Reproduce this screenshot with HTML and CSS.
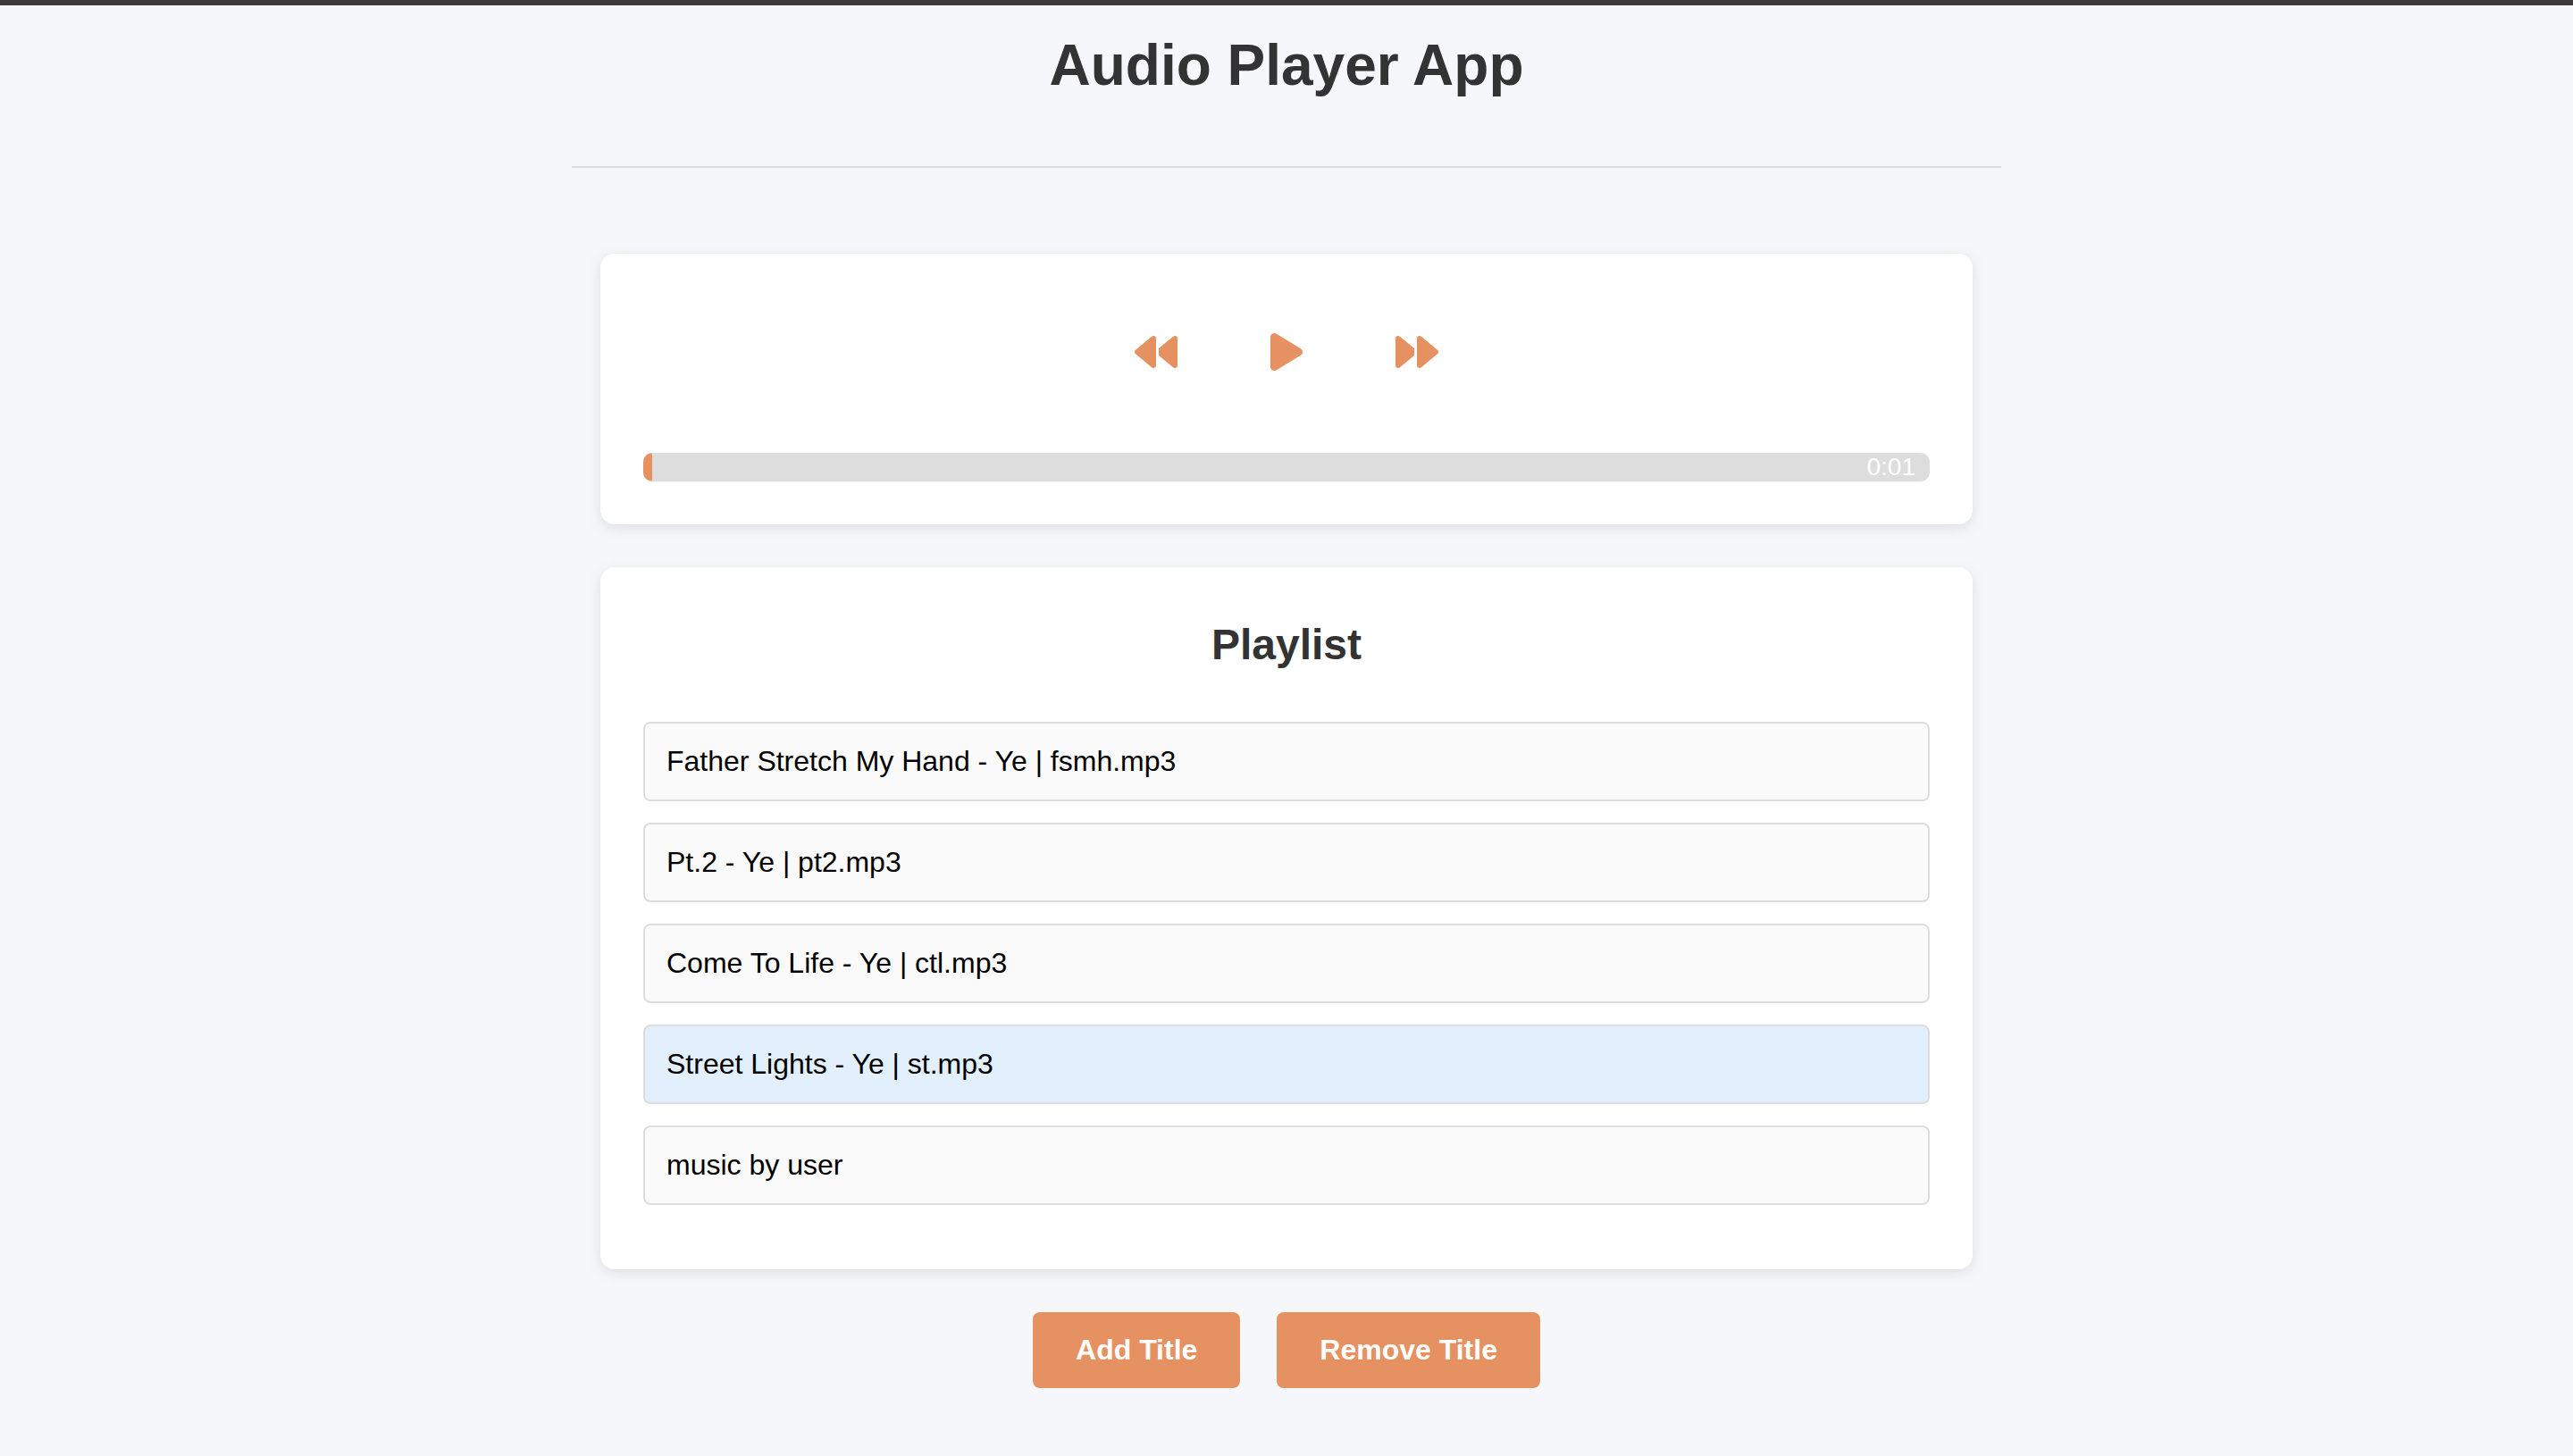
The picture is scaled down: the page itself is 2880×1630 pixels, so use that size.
FILE: index.html
```html
<!DOCTYPE html>
<html lang="en">
<head>
<meta charset="utf-8">
<meta name="viewport" content="width=device-width, initial-scale=1">
<title>Audio Player App</title>
<link rel="stylesheet" href="styles.css">
</head>
<body>
<main class="app">
  <header class="app-header">
    <h1 class="app-title">Audio Player App</h1>
  </header>
  <div class="content">
    <section class="card" aria-label="Player">
      <div class="controls">
        <button class="control" type="button" aria-label="Previous">
          <svg class="icon" viewBox="0 0 512 512" aria-hidden="true"><path d="M459.5 440.6c9.5 7.9 22.8 9.7 34.1 4.4s18.4-16.6 18.4-29V96c0-12.4-7.2-23.7-18.4-29s-24.5-3.6-34.1 4.4L288 214.3V297.7L459.5 440.6zM256 352V96c0-12.4-7.2-23.7-18.4-29s-24.5-3.6-34.1 4.4l-192 160C4.2 237.5 0 246.5 0 256s4.2 18.5 11.5 24.6l192 160c9.5 7.9 22.8 9.7 34.1 4.4s18.4-16.6 18.4-29V352z"/></svg>
        </button>
        <button class="control" type="button" aria-label="Play">
          <svg class="icon" viewBox="0 0 384 512" aria-hidden="true"><path d="M73 39c-14.8-9.1-33.4-9.4-48.5-.9S0 62.6 0 80V432c0 17.4 9.4 33.4 24.5 41.9s33.7 8.1 48.5-.9L361 297c14.3-8.7 23-24.2 23-41s-8.7-32.2-23-41L73 39z"/></svg>
        </button>
        <button class="control" type="button" aria-label="Next">
          <svg class="icon" viewBox="0 0 512 512" aria-hidden="true"><path d="M52.5 440.6c-9.5 7.9-22.8 9.7-34.1 4.4S0 428.4 0 416V96C0 83.6 7.2 72.3 18.4 67s24.5-3.6 34.1 4.4L224 214.3V297.7L52.5 440.6zM256 352V96c0-12.4 7.2-23.7 18.4-29s24.5-3.6 34.1 4.4l192 160c7.3 6.1 11.5 15.1 11.5 24.6s-4.2 18.5-11.5 24.6l-192 160c-9.5 7.9-22.8 9.7-34.1 4.4s-18.4-16.6-18.4-29V352z"/></svg>
        </button>
      </div>
      <div class="progress">
        <div class="progress-fill"></div>
        <span class="progress-time">0:01</span>
      </div>
    </section>
    <section class="card">
      <h2 class="card-title">Playlist</h2>
      <ul class="playlist">
        <li class="track">Father Stretch My Hand - Ye | fsmh.mp3</li>
        <li class="track">Pt.2 - Ye | pt2.mp3</li>
        <li class="track">Come To Life - Ye | ctl.mp3</li>
        <li class="track track-active">Street Lights - Ye | st.mp3</li>
        <li class="track">music by user</li>
      </ul>
    </section>
    <div class="actions">
      <button class="action" type="button">Add Title</button>
      <button class="action" type="button">Remove Title</button>
    </div>
  </div>
</main>
</body>
</html>
```
FILE: styles.css
```css
* {
  box-sizing: border-box;
}

body {
  margin: 0;
  border-top: 6px solid #3b3b3b;
  background: #f5f7fb;
  color: #000;
  font: 32px/37px "Liberation Sans", Arial, sans-serif;
}

.app {
  max-width: 1600px;
  margin: 0 auto;
}

.app-header {
  padding: 30px 0 76px;
  border-bottom: 2px solid #ddd;
  text-align: center;
}

.app-title {
  margin: 0;
  color: #333;
  font-size: 64px;
  line-height: 74px;
}

.content {
  display: flex;
  flex-direction: column;
  gap: 48px;
  padding: 96px 32px 48px;
}

.card {
  padding: 48px;
  border-radius: 16px;
  background: #fff;
  box-shadow: 0 4px 16px rgba(0, 0, 0, 0.1);
}

.controls {
  display: flex;
  justify-content: center;
  gap: 40px;
  padding: 6px 0 57px;
}

.control {
  display: flex;
  padding: 32px;
  border: 0;
  background: none;
  color: #e69162;
  cursor: pointer;
}

.icon {
  height: 48px;
  fill: currentColor;
}

.progress {
  display: flex;
  justify-content: space-between;
  height: 32px;
  border-radius: 10px;
  background: #ddd;
  overflow: hidden;
}

.progress-fill {
  width: 10px;
  border-radius: 10px 3px 3px 10px;
  background: #e69162;
}

.progress-time {
  padding-right: 16px;
  color: #fff;
  font-size: 28px;
  line-height: 32px;
}

.card-title {
  margin: 0 0 48px;
  padding: 12px 0;
  color: #333;
  font-size: 48px;
  line-height: 53px;
  text-align: center;
}

.playlist {
  display: flex;
  flex-direction: column;
  gap: 24px;
  margin: 0 0 24px;
  padding: 0;
  list-style: none;
}

.track {
  padding: 24px;
  border: 2px solid #ddd;
  border-radius: 8px;
  background: #fafafa;
}

.track-active {
  background: #e2effd;
}

.actions {
  display: flex;
  flex-wrap: wrap;
  justify-content: center;
  gap: 41px;
}

.action {
  padding: 24px 48px;
  border: 0;
  border-radius: 8px;
  background: #e69162;
  color: #fff;
  font: inherit;
  font-weight: bold;
  cursor: pointer;
}
```
